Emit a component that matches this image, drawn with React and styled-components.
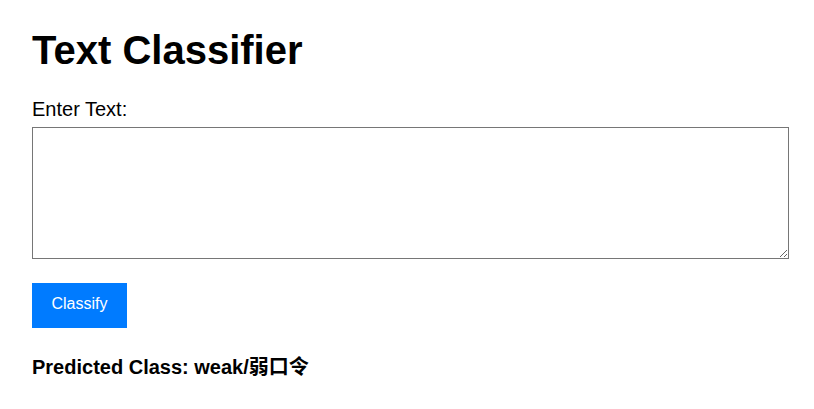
import React, { useState } from 'react';
import styled, { createGlobalStyle } from 'styled-components';

const GlobalStyle = createGlobalStyle`
  body {
    margin: 0;
    background: #ffffff;
    font-family: "Liberation Sans", Arial, sans-serif;
    color: #000000;
  }
`;

const Page = styled.div`
  padding: 27px 32px 0 32px;
  display: flex;
  flex-direction: column;
  align-items: flex-start;
`;

const Title = styled.h1`
  margin: 0;
  font-size: 40px;
  line-height: 46px;
  font-weight: bold;
`;

const Label = styled.label`
  margin-top: 25px;
  font-size: 20px;
  line-height: 23px;
`;

const TextArea = styled.textarea`
  margin-top: 6px;
  width: 757px;
  height: 132px;
  box-sizing: border-box;
  padding: 2.4px;
  border: 1px solid #767676;
  font-family: "Liberation Mono", monospace;
  font-size: 16px;
`;

const Button = styled.button`
  margin-top: 24px;
  box-sizing: border-box;
  height: 45px;
  padding: 11px 19.5px 15px;
  border: none;
  background: #007bff;
  color: #ffffff;
  font-family: "Liberation Sans", Arial, sans-serif;
  font-size: 16px;
  line-height: 19px;
  cursor: pointer;
`;

const Result = styled.p`
  margin: 28px 0 0 0;
  font-size: 20px;
  line-height: 23px;
  font-weight: bold;
  font-family: "Liberation Sans", Arial, "Noto Sans CJK SC", sans-serif;
`;

export default function App() {
  const [text, setText] = useState('');
  return (
    <>
      <GlobalStyle />
      <Page>
        <Title>Text Classifier</Title>
        <Label htmlFor="input">Enter Text:</Label>
        <TextArea id="input" value={text} onChange={e => setText(e.target.value)} />
        <Button>Classify</Button>
        <Result>Predicted Class: weak/弱口令</Result>
      </Page>
    </>
  );
}
